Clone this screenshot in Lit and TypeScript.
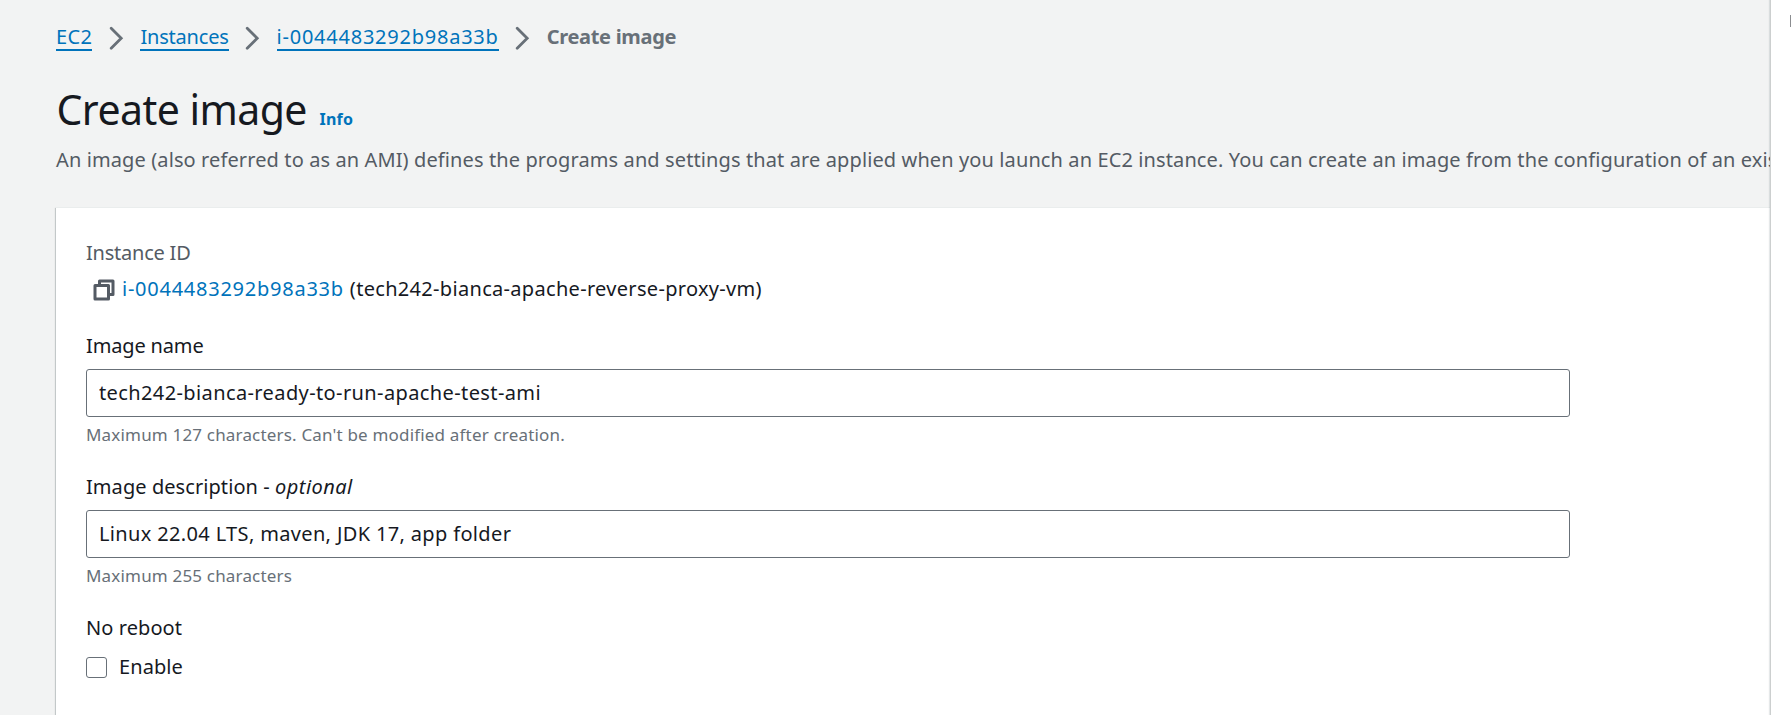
import { LitElement, html, css, svg } from "lit";
import { customElement, property } from "lit/decorators.js";

@customElement("form-field")
class FormField extends LitElement {
  @property() label = "";
  @property() value = "";
  @property() hint = "";
  @property({ type: Boolean }) optional = false;

  static styles = css`
    :host { display: flex; flex-direction: column; height: 141px; }
    .label { font-size: 20px; line-height: 30px; margin-bottom: 8px; letter-spacing: -0.15px; white-space: pre; }
    .label.long { letter-spacing: 0.07px; }
    .opt { font-style: italic; letter-spacing: 0.45px; }
    .input {
      box-sizing: border-box; width: 1484px; height: 48px; padding: 0 12px 2px; margin: 0;
      border: 1px solid #687078; border-radius: 3px; background: #fff; outline: none;
      font: inherit; font-size: 20px; line-height: 30px; color: #16191f; letter-spacing: 0.39px;
    }
    .input.words { letter-spacing: 0.35px; }
    .hint { font-size: 17px; line-height: 24px; margin-top: 6px; color: #687078; letter-spacing: 0.18px; }
  `;

  render() {
    return html`
      <label class="label ${this.optional ? "long" : ""}" for="field">${this.label}${this.optional
        ? html` - <span class="opt">optional</span>`
        : ""}</label>
      <input id="field" class="input ${this.optional ? "words" : ""}" .value=${this.value} />
      <div class="hint">${this.hint}</div>
    `;
  }
}

@customElement("app-root")
class AppRoot extends LitElement {
  static styles = css`
    :host {
      display: flex; height: 715px; overflow: hidden; background: #f2f3f3; color: #16191f;
      font-family: "Noto Sans", "Open Sans", sans-serif; font-size: 20px; line-height: 30px;
    }
    .main { width: 1770px; flex: none; box-sizing: border-box; padding: 23px 0 0 56px; overflow: hidden; white-space: nowrap; }
    .crumbs { display: flex; align-items: flex-start; height: 28px; line-height: 27px; }
    .crumb { height: 26px; color: #0073bb; border-bottom: 2px solid #0073bb; text-decoration: none; }
    .ec2 { letter-spacing: 0.4px; }
    .inst { letter-spacing: -0.2px; }
    .id { letter-spacing: 0.76px; }
    .current { font-weight: 700; color: #687078; letter-spacing: -0.3px; }
    .chev { width: 15px; height: 24px; margin: 3px 16.5px 0 16.5px; flex: none; }
    .heading { display: flex; align-items: baseline; margin-top: 31px; height: 63px; }
    h1 { margin: 0 0 0 0.5px; font-size: 41px; line-height: 54px; font-weight: 400; letter-spacing: -0.55px; }
    .info { margin-left: 12.5px; font-size: 16px; font-weight: 700; color: #0073bb; letter-spacing: 0.3px; text-decoration: none; }
    .desc { margin: 0; color: #545b64; letter-spacing: 0.11px; }
    .panel {
      margin-top: 32px; height: 560px; box-sizing: border-box; padding: 30px 0 0 30px; background: #fff;
      border-top: 1px solid #eaeded;
      box-shadow: 0 1px 1px 0 rgba(0, 28, 36, 0.3), 1px 1px 1px 0 rgba(0, 28, 36, 0.15), -1px 1px 1px 0 rgba(0, 28, 36, 0.15);
    }
    .key { color: #545b64; letter-spacing: -0.22px; }
    .instance { display: flex; margin: 6px 0 27px 7px; }
    .copy { width: 22px; height: 22px; margin: 5px 7px 0 0; flex: none; }
    .link { color: #0073bb; text-decoration: none; letter-spacing: 0.75px; margin-right: 6px; }
    .name { letter-spacing: 0.31px; }
    .plain { letter-spacing: 0.08px; }
    .check { display: flex; align-items: center; margin-top: 9px; }
    .box { box-sizing: border-box; width: 21px; height: 21px; margin: 0 12px 0 0; border: 1px solid #687078; border-radius: 3px; background: #fff; appearance: none; }
    .side { flex: 1; border-left: 1px solid #cccfcf; background: #fff; box-shadow: -1px 0 1px rgba(0, 28, 36, 0.1); display: flex; justify-content: flex-end; z-index: 1; }
    .edge { width: 1px; height: 12px; margin-top: 15px; background: #8b8d90; }
  `;

  chevron() {
    return svg`<svg class="chev" viewBox="0 0 15 24"><path d="M2.2 2.2 12.2 12.2 2.2 22.2" fill="none" stroke="#687078" stroke-width="2.8" stroke-linejoin="miter" stroke-linecap="round"/></svg>`;
  }

  render() {
    return html`
      <div class="main">
        <nav class="crumbs">
          <a class="crumb ec2">EC2</a>${this.chevron()}
          <a class="crumb inst">Instances</a>${this.chevron()}
          <a class="crumb id">i-0044483292b98a33b</a>${this.chevron()}
          <span class="current">Create image</span>
        </nav>
        <header class="heading"><h1>Create image</h1><a class="info">Info</a></header>
        <p class="desc">An image (also referred to as an AMI) defines the programs and settings that are applied when you launch an EC2 instance. You can create an image from the configuration of an existing instance.</p>
        <section class="panel">
          <div class="key">Instance ID</div>
          <div class="instance">
            <svg class="copy" viewBox="0 0 22 22" fill="none" stroke="#545b64" stroke-width="3" stroke-linejoin="round">
              <path d="M6.5 5.5V2H20v13.5h-4" /><path d="M2 6.5h13.5V20H2z" />
            </svg>
            <a class="link">i-0044483292b98a33b</a><span class="name">(tech242-bianca-apache-reverse-proxy-vm)</span>
          </div>
          <form-field label="Image name" value="tech242-bianca-ready-to-run-apache-test-ami" hint="Maximum 127 characters. Can't be modified after creation."></form-field>
          <form-field label="Image description" optional value="Linux 22.04 LTS, maven, JDK 17, app folder" hint="Maximum 255 characters"></form-field>
          <div class="plain">No reboot</div>
          <label class="check"><input class="box" type="checkbox" /><span class="plain">Enable</span></label>
        </section>
      </div>
      <aside class="side"><div class="edge"></div></aside>
    `;
  }
}
